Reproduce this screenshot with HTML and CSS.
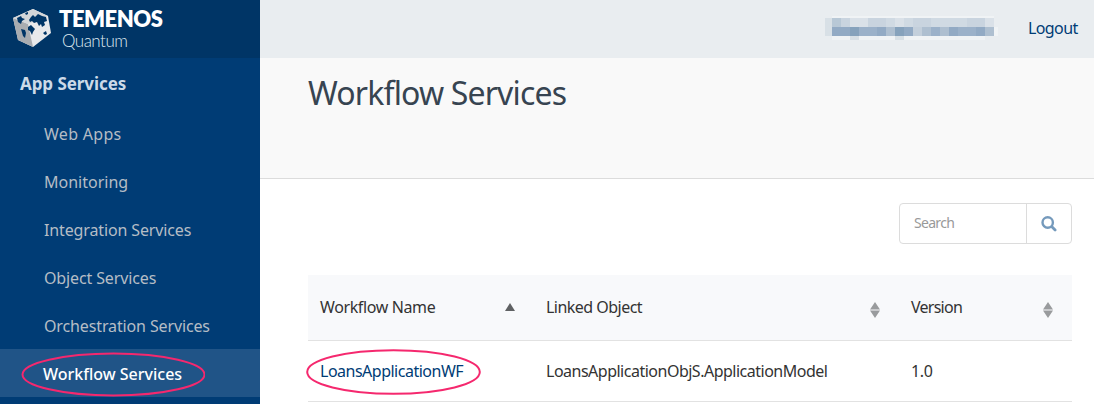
FILE: index.html
```html
<!DOCTYPE html>
<html lang="en">
<head>
<meta charset="utf-8">
<title>Workflow Services</title>
<link rel="stylesheet" href="styles.css">
</head>
<body>
<div class="app">
  <aside class="sidebar">
    <div class="brand">
      <svg class="cube" width="38" height="40" viewBox="0 0 38 40">
        <path fill="#e8e9eb" d="M0 10 20 1 35 8 38 25 20 39 5 32z"/>
        <path fill="#a9acb0" d="M0 10 15 16 20 39 5 32z"/>
        <path fill="#d3d6d9" d="M0 10 20 1 35 8 15 16z"/>
        <path fill="#003566" d="M4 10 8 8 9 10 12 11 9 13 8 16 5 14zM12 5 15 4 15 6 13 7zM8 21 12 22 13 25 12 30 10 28zM18 9 20 7 22 9 25 6 29 8 33 9 34 13 31 14 32 17 29 19 28 16 26 18 24 14 21 15 19 13 17 14 16 12zM15 19 18 17 21 20 22 21 20 24 19 27 17 23 15 22zM30 25 33 23 34 26 32 27z"/>
      </svg>
      <div class="wordmark"><b>TEMENOS</b><span>Quantum</span></div>
    </div>
    <h2>App Services</h2>
    <nav>
      <a class="web">Web Apps</a>
      <a class="mon">Monitoring</a>
      <a>Integration Services</a>
      <a>Object Services</a>
      <a>Orchestration Services</a>
      <a class="active">Workflow Services
        <svg class="ring" width="184" height="46" viewBox="0 0 184 46"><ellipse cx="92.5" cy="23.5" rx="91" ry="21"/></svg>
      </a>
    </nav>
  </aside>
  <main>
    <header class="topbar">
      <svg class="redacted" width="173" height="24" viewBox="0 0 173 24" shape-rendering="crispEdges">
        <path fill="#f0f3f5" d="M7 0h162v2H7zM7 20h18v4H7zM34 20h126v4H34zM169 11h4v9h-4z"/>
        <path fill="#d8e0e6" d="M0 2h7v18H0zM25 20h9v4h-9zM70 20h9v4h-9z"/>
        <path fill="#c9d4df" d="M7 2h162v9H7z"/>
        <path fill="#b8c8d6" d="M7 2h9v9H7z"/>
        <path fill="#dae1e8" d="M25 2h18v9H25zM70 2h9v9h-9zM160 2h9v9h-9z"/>
        <path fill="#d0dae3" d="M61 2h9v9h-9zM79 2h9v9h-9zM106 2h36v9h-36z"/>
        <path fill="#9bb1c9" d="M7 11h162v9H7z"/>
        <path fill="#92aac4" d="M7 11h18v9H7zM52 11h9v9h-9zM79 11h9v9h-9zM124 11h9v9h-9zM151 11h9v9h-9z"/>
        <path fill="#86a2bc" d="M25 11h9v9h-9zM70 11h9v9h-9z"/>
        <path fill="#c3cfdb" d="M88 11h9v9h-9z"/>
        <path fill="#aebfd0" d="M61 11h9v9h-9zM97 11h9v9h-9zM115 11h9v9h-9zM160 11h9v9h-9z"/>
      </svg>
      <a class="logout">Logout</a>
    </header>
    <section class="page-head"><h1>Workflow Services</h1></section>
    <section class="content">
      <div class="search">
        <span class="field">Search</span>
        <span class="button">
          <svg width="16" height="16" viewBox="0 0 16 16" fill="none" stroke="#759abc"><circle cx="6.7" cy="6.5" r="5.2" stroke-width="2.4"/><path stroke-width="2.8" stroke-linecap="round" d="m10.9 10.7 3.2 3.2"/></svg>
        </span>
      </div>
      <div class="table">
        <div class="row head">
          <div class="cell"><span class="name">Workflow Name</span><svg class="asc" width="10" height="8" viewBox="0 0 10 8"><path fill="#5f6163" d="m5 0 5 8H0z"/></svg></div>
          <div class="cell"><span class="object">Linked Object</span><svg class="sort" width="10" height="16" viewBox="0 0 10 16"><path fill="#999b9d" d="m5 0 5 7.5H0zM0 8.5h10L5 16z"/></svg></div>
          <div class="cell"><span class="version">Version</span><svg class="sort" width="10" height="16" viewBox="0 0 10 16"><path fill="#999b9d" d="m5 0 5 7.5H0zM0 8.5h10L5 16z"/></svg></div>
        </div>
        <div class="row">
          <div class="cell"><a class="link">LoansApplicationWF<svg class="ring" width="176" height="48" viewBox="0 0 176 48"><ellipse cx="88.5" cy="24" rx="86.3" ry="21.8"/></svg></a></div>
          <div class="cell"><span class="model">LoansApplicationObjS.ApplicationModel</span></div>
          <div class="cell"><span>1.0</span></div>
        </div>
      </div>
    </section>
  </main>
</div>
</body>
</html>
```
FILE: styles.css
```css
* { box-sizing: border-box; }
body { margin: 0; background: #fff; color: #333; font: 16px/24px "Noto Sans", "Open Sans", sans-serif; }
.app { display: flex; height: 404px; overflow: hidden; }

.sidebar { width: 260px; flex: none; background: #003c75; }
.brand { height: 58px; background: #003566; display: flex; padding: 8px 0 0 13px; gap: 8px; }
.wordmark { color: #fff; display: flex; flex-direction: column; gap: 4px; }
.wordmark b { display: block; height: 20px; font: 800 22px/21px Lato, sans-serif; letter-spacing: -0.5px; }
.wordmark span { display: block; font: 300 17px/17px Lato, sans-serif; color: #dfe8f0; padding-left: 3px; letter-spacing: -0.5px; }
.sidebar h2 { margin: 0; padding: 14px 20px 0; height: 51px; font-size: 17px; line-height: 24px; color: #ccdae8; letter-spacing: -0.07px; }
nav a { display: block; position: relative; height: 48px; padding: 13px 0 0 44px; color: #b5bdc5; white-space: nowrap; letter-spacing: -0.13px; }
nav .web { letter-spacing: 0.3px; }
nav .mon { letter-spacing: 0; }
nav .active { background: #205487; color: #fff; font-weight: 500; padding-left: 43px; letter-spacing: 0; }
.ring { position: absolute; fill: none; stroke: #f5286e; stroke-width: 2; }
.active .ring { left: 21px; top: 2px; }

main { flex: 1; min-width: 0; }
.topbar { height: 58px; background: #e9edf0; display: flex; justify-content: flex-end; align-items: flex-start; padding: 16px 16px 0 0; gap: 30px; }
.logout { width: 50px; color: #003c75; letter-spacing: -0.6px; white-space: nowrap; }
.page-head { height: 121px; background: #f9f9f9; border-bottom: 1px solid #dcdcdc; padding: 15px 0 0 48px; }
h1 { margin: 0; font-weight: 400; font-size: 32px; line-height: 40px; color: #374451; letter-spacing: -0.83px; }
.content { padding: 24px 22px 0 48px; }
.search { width: 173px; height: 41px; margin-left: auto; border: 1px solid #dcdcdc; border-radius: 4px; display: flex; }
.field { flex: 1; padding: 7px 0 0 14px; font-size: 14px; letter-spacing: -0.7px; color: #999; }
.button { width: 45px; border-left: 1px solid #dcdcdc; display: flex; align-items: center; justify-content: center; }
.table { margin-top: 31px; }
.row { display: grid; grid-template-columns: 226px 365px 173px; height: 61px; border-bottom: 1px solid #e2e2e2; }
.head { height: 66px; background: #f8f9fb; }
.cell { display: flex; justify-content: space-between; padding: 18px 19px 0 12px; letter-spacing: -0.3px; white-space: nowrap; }
.head .cell { padding-top: 20px; }
.name { letter-spacing: -0.38px; }
.object { letter-spacing: -0.53px; }
.version { letter-spacing: -0.75px; }
.model { letter-spacing: -0.5px; }
.asc { margin: 8px 0 0; }
.sort { margin-top: 7px; }
.link { position: relative; color: #003c75; letter-spacing: -0.5px; }
.link .ring { left: -15px; top: -11px; }
```
